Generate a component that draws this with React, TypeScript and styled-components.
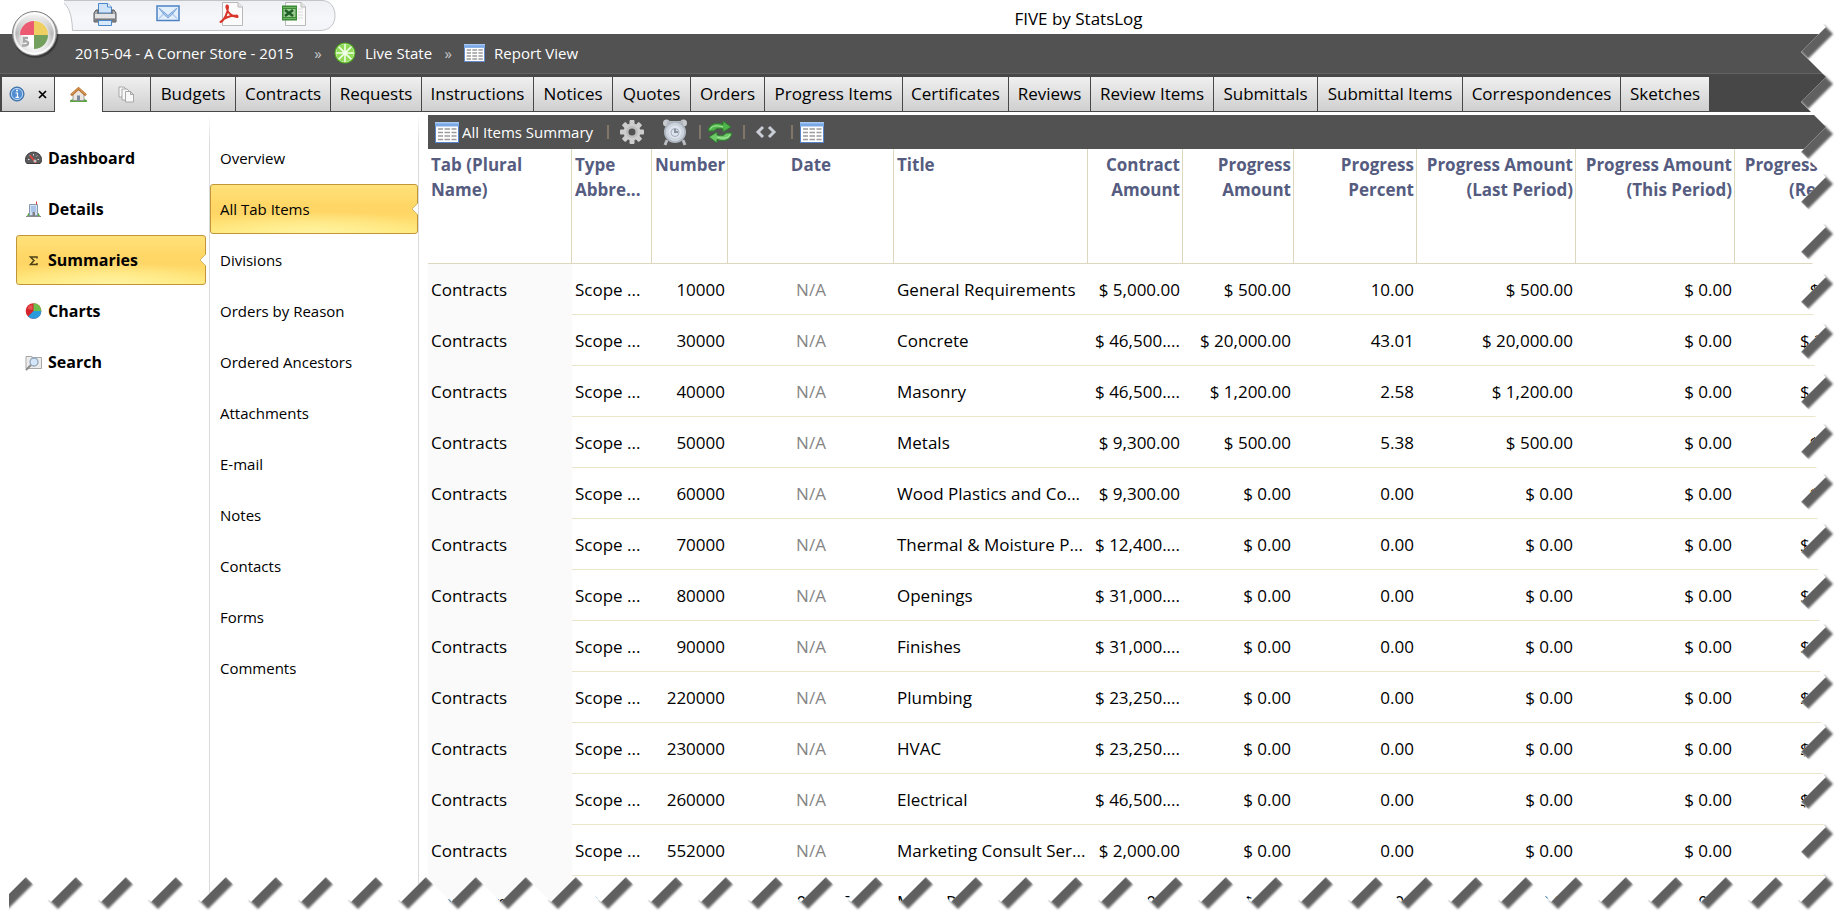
import React, { useEffect, useState } from "react";
import styled, { createGlobalStyle, css } from "styled-components";

const GlobalStyle = createGlobalStyle`
  * { box-sizing: border-box; }
  html, body { margin: 0; padding: 0; background: #fff; }
  body { font-family: "Open Sans", "Segoe UI", sans-serif; color: #000; overflow: hidden; }
  button { font: inherit; color: inherit; margin: 0; padding: 0; border: 0; background: none; cursor: pointer; }
  a { color: inherit; text-decoration: none; }
  svg { display: block; flex: none; }
  ul, ol { list-style: none; margin: 0; padding: 0; }
`;

/* ---------- layout ---------- */

const Screen = styled.div`
  position: relative;
  display: flex;
  flex-direction: column;
  height: 100vh;
  overflow: hidden;
`;

const TitleBar = styled.header`
  display: flex;
  height: 34px;
  padding-left: 64px;
`;

const QuickAccess = styled.div`
  position: relative;
  display: flex;
  gap: 39px;
  width: 272px;
  padding: 2px 0 0 29px;
`;

const QuickBackdrop = styled.svg`
  position: absolute;
  left: 0;
  top: 0;
`;

const QuickButton = styled.button`
  position: relative;
  width: 24px;
  height: 24px;
`;

const AppTitle = styled.h1`
  flex: 1;
  margin: 0;
  padding: 6px 20px 0 0;
  font-size: 17px;
  line-height: 26px;
  font-weight: 400;
  text-align: center;
`;

const OrbButton = styled.button`
  position: absolute;
  left: 10px;
  top: 9px;
  z-index: 2;
`;

const Breadcrumb = styled.nav`
  flex: none;
  height: 40px;
  background: #525252;
  border-bottom: 1px solid #636363;
  color: #fff;
  font-size: 15px;
  line-height: 38px;

  ol { display: flex; padding-left: 75px; }
  li, a { display: flex; align-items: center; }
  li:first-child { min-width: 227px; }
  a { gap: 9px; }
`;

const Chevron = styled.span`
  width: 32px;
  text-align: center;
  color: #c8c8c8;
`;

const TabStrip = styled.div`
  flex: none;
  display: flex;
  height: 38px;
  padding: 3px 0 1px 2px;
  background: #474747;
`;

const Tab = styled.button<{ $width: number; $active?: boolean }>`
  flex: none;
  display: flex;
  align-items: center;
  justify-content: center;
  gap: 13px;
  width: ${(p) => p.$width}px;
  height: ${(p) => (p.$active ? 35 : 34)}px;
  border-right: 1px solid #474747;
  background: ${(p) => (p.$active ? "#fff" : "linear-gradient(#f0f0f0, #cfcfcf)")};
  font-size: 17px;
  line-height: 24px;
  white-space: nowrap;
`;

const Main = styled.div`
  flex: 1;
  display: flex;
  min-height: 0;
  padding-top: 3px;
`;

const navPanel = css`
  flex: none;
  padding-top: 18px;
  border-right: 1px solid;
  border-image: linear-gradient(#fff, #dadada 30px) 1;
`;

const PrimaryNav = styled.nav`
  ${navPanel}
  width: 210px;
  padding-left: 16px;
  padding-right: 3px;
  font-size: 16px;
  font-weight: 700;
`;

const SecondaryNav = styled.nav`
  ${navPanel}
  width: 209px;
  font-size: 15px;
`;

const NavLink = styled.a<{ $selected?: boolean; $inset: number }>`
  position: relative;
  display: flex;
  align-items: center;
  gap: 6px;
  height: 50px;
  margin-bottom: 1px;
  padding-left: ${(p) => p.$inset}px;
  border: 1px solid transparent;
  border-radius: 3px;
  ${(p) =>
    p.$selected &&
    css`
      border-color: #c29536;
      background:
        radial-gradient(ellipse 60% 45% at 50% 100%, #fff3a0, rgba(255, 240, 140, 0)),
        linear-gradient(#ffe27a, #ffd767 40%, #ffd666 58%, #ffe97c);
    `}
`;

const Notch = styled.svg`
  position: absolute;
  right: -1px;
  top: 18px;
`;

const Report = styled.section`
  flex: 1;
  min-width: 0;
  margin-left: 9px;
  overflow: hidden;
`;

const Toolbar = styled.div`
  display: flex;
  align-items: center;
  height: 34px;
  padding-left: 7px;
  background: #525252;
  color: #fff;
  font-size: 15px;
`;

const ReportName = styled.button`
  display: flex;
  align-items: center;
  gap: 3px;
  width: 168px;
`;

const ToolButton = styled.button<{ $width: number }>`
  display: flex;
  align-items: center;
  justify-content: center;
  width: ${(p) => p.$width}px;
  height: 34px;
`;

const Divider = styled.span`
  width: 2px;
  height: 14px;
  margin-left: 4px;
  background: #80766a;
`;

const Grid = styled.table`
  width: 1466px;
  table-layout: fixed;
  border-collapse: separate;
  border-spacing: 0;
  font-size: 17px;
  line-height: 25px;
`;

type Align = "left" | "right" | "center";

const HeadCell = styled.th<{ $align: Align }>`
  height: 115px;
  padding: 3px 2px 0 3px;
  vertical-align: top;
  text-align: ${(p) => p.$align};
  color: #555c80;
  white-space: pre;
  border-right: 1px solid #ddd8bd;
  border-bottom: 1px solid #ddd8bd;
`;

const Cell = styled.td<{ $align: Align; $muted?: boolean }>`
  height: 51px;
  padding: 1px 3px 0;
  text-align: ${(p) => p.$align};
  white-space: nowrap;
  overflow: hidden;
  color: ${(p) => (p.$muted ? "#858585" : "#000")};
  border-bottom: 1px solid #ebe5ca;

  &:first-child {
    background: #fafafa;
    border-bottom-color: #fafafa;
  }
`;

const TornOverlay = styled.svg`
  position: absolute;
  inset: 0;
  width: 100%;
  height: 100%;
  z-index: 5;
  pointer-events: none;
`;

/* ---------- icons ---------- */

const PrinterIcon = () => (
  <svg width="24" height="24" viewBox="0 0 24 24">
    <path d="M5.500 11V1.500h9L18.500 5v6z" fill="#cfe4fb" stroke="#4a86c8" />
    <path d="M14.500 1.500V5h4" fill="#fff" stroke="#4a86c8" />
    <path d="M3 8h2v4h14V8h2l2 3v9H1v-9z" fill="#a9a9ab" stroke="#56575a" />
    <path d="M2 12h20v4H2z" fill="#e4e4e6" />
    <path d="M2 17h20v3H2z" fill="#77787b" />
    <path d="M5.500 18.500h13v5h-13z" fill="#d8e9fc" stroke="#4a86c8" />
  </svg>
);

const MailIcon = () => (
  <svg width="24" height="24" viewBox="0 0 24 24">
    <rect x="1" y="4" width="22" height="14.500" fill="#e4effc" stroke="#4c82c3" strokeWidth="1.500" />
    <path d="M3 16.500l6-6M21 16.500l-6-6" stroke="#b4cdec" strokeWidth="1.500" />
    <path d="M3 6l9 7.500L21 6l-4.500 6-4.500 4-4.500-4z" fill="#a8c6ee" stroke="#7fa6da" />
  </svg>
);

const PageShape = () => (
  <>
    <path d="M3.500 .5H19L23.500 5v18.500H3.500z" fill="#fbfbfb" stroke="#b9b9b9" />
    <path d="M19 .5V5h4.500" fill="#e6e6e6" stroke="#b9b9b9" />
  </>
);

const PdfIcon = () => (
  <svg width="24" height="24" viewBox="0 0 24 24">
    <PageShape />
    <path
      d="M1.500 20C5 18.500 9 11 9 5c0-2-2-2-1.500.5C8.500 10 12 14.500 18 15c1 0 .5-1.700-1-1.600C11 13.500 5 16 1.500 20z"
      fill="none"
      stroke="#d9352b"
      strokeWidth="2"
      strokeLinejoin="round"
    />
  </svg>
);

const ExcelIcon = () => (
  <svg width="24" height="24" viewBox="0 0 24 24">
    <PageShape />
    <path d="M16 7h5M16 10h5M16 13h5M16 16h5" stroke="#dcdcdc" />
    <rect x="0" y="3.500" width="15" height="15" fill="#3c8a35" />
    <path d="M1.500 7h12v8h-12z" fill="#9ccb92" />
    <path d="M3 8l8 6M11 8l-8 6" stroke="#1f5f24" strokeWidth="2.500" />
    <path d="M1 5.500h13M1 16.500h13" stroke="#6db463" />
  </svg>
);

const OrbIcon = () => (
  <svg width="52" height="52" viewBox="0 0 52 52">
    <defs>
      <linearGradient id="orbRim" x1="0" y1="0" x2="0" y2="1">
        <stop offset="0" stopColor="#fdfdfd" />
        <stop offset=".5" stopColor="#b9b9b9" />
        <stop offset="1" stopColor="#f6f6f6" />
      </linearGradient>
      <radialGradient id="orbFace" cx=".5" cy=".5" r=".5">
        <stop offset=".6" stopColor="#fff" />
        <stop offset="1" stopColor="#fff" stopOpacity="0" />
      </radialGradient>
    </defs>
    <circle cx="25.500" cy="26" r="23" fill="#000" opacity=".3" />
    <circle cx="24.500" cy="24.500" r="22" fill="url(#orbRim)" stroke="#808080" />
    <circle cx="24.500" cy="24.500" r="20" fill="none" stroke="#fff" strokeOpacity=".8" strokeWidth="1.500" />
    <circle cx="24.500" cy="27" r="17" fill="url(#orbFace)" />
    <path d="M24 26V12a14 14 0 0 0-14 14z" fill="#ec5a72" />
    <path d="M24 26V12a14 14 0 0 1 14 14z" fill="#f0cf62" />
    <path d="M24 26h14a14 14 0 0 1-14 14z" fill="#74a05e" />
    <path d="M18 29h-4v3.500c5-1.500 6 4.300 0 4h-2" fill="none" stroke="#a8a8a8" strokeWidth="2.400" />
  </svg>
);

const LimeIcon = () => (
  <svg width="22" height="22" viewBox="0 0 22 22">
    <circle cx="11" cy="11" r="10.500" fill="#4fae1c" />
    <circle cx="11" cy="11" r="8.600" fill="#8fdc52" />
    <path
      d="M11 2v18M2 11h18M4.600 4.600l12.800 12.800M17.400 4.600L4.600 17.400"
      stroke="#f2ffe8"
      strokeWidth="1.600"
    />
    <circle cx="11" cy="11" r="9" fill="none" stroke="#d9f7c0" strokeWidth=".8" />
  </svg>
);

const TableIcon = ({ width = 24, height = 21 }: { width?: number; height?: number }) => (
  <svg width={width} height={height} viewBox="0 0 24 21" preserveAspectRatio="none">
    <rect x=".5" y=".5" width="23" height="20" fill="#fff" stroke="#5584cc" />
    <path d="M0 0h24v4.500H0z" fill="#7aa8e6" />
    <path d="M0 0h24v1.500H0z" fill="#a7c8f2" />
    <path
      d="M3 7h5M9.500 7h5.500M16.500 7h5M3 10.500h5M9.500 10.500h5.500M16.500 10.500h5M3 14h5M9.500 14h5.500M16.500 14h5M3 17.500h5M9.500 17.500h5.500M16.500 17.500h5"
      stroke="#9b9b9b"
      strokeWidth="1.500"
    />
  </svg>
);

const InfoIcon = () => (
  <svg width="16" height="16" viewBox="0 0 16 16">
    <circle cx="8" cy="8" r="7" fill="#4f8dd0" stroke="#35679f" />
    <circle cx="8" cy="8" r="5.600" fill="none" stroke="#bcd7f3" />
    <path d="M6.500 7H8.500v4M6.500 11.300h3.500" stroke="#fff" strokeWidth="1.200" fill="none" />
    <circle cx="8" cy="4.600" r="1" fill="#fff" />
  </svg>
);

const CloseIcon = () => (
  <svg width="9" height="9" viewBox="0 0 9 9">
    <path d="M1 1l7 7M8 1L1 8" stroke="#000" strokeWidth="1.700" />
  </svg>
);

const HomeIcon = () => (
  <svg width="17" height="15" viewBox="0 0 17 15">
    <path d="M0 13.500c2-2 4-1 8.500-1s6.500-1 8.500 1v1.500H0z" fill="#5aa63c" />
    <path d="M3 7l5.500-5L14 7v6.500H3z" fill="#eae6df" stroke="#8d8d8d" strokeWidth=".8" />
    <path d="M7 8.500h3v5H7z" fill="#7c8a9c" />
    <path d="M1 8.300L8.500 1.500 16 8.300" fill="none" stroke="#b9722e" strokeWidth="2.600" />
    <path d="M1.500 7.500L8.500 1.200l7 6.300" fill="none" stroke="#e2a864" />
  </svg>
);

const PagesIcon = () => (
  <svg width="17" height="17" viewBox="0 0 17 17" fill="#f8f8f8" stroke="#a8a8a8">
    <path d="M1 1h5l2 2v8H1z" />
    <path d="M4 3h5l2 2v9H4z" />
    <path d="M7.500 5.500h5l3 3v7.500h-8zM12.500 5.500v3h3" />
  </svg>
);

const GaugeIcon = () => (
  <svg width="17" height="17" viewBox="0 0 17 17">
    <path d="M.5 9.500a8 7.500 0 0 1 16 0c0 2-.5 3.500-1.500 4H2C1 13 .5 11.500.5 9.500z" fill="#5c5c5e" stroke="#3b3b3d" />
    <path d="M3 9.500h1.500M4.700 5.500l1 1M8.500 4v1.500M12.300 5.500l-1 1M14 9.500h-1.500" stroke="#e0e0e0" />
    <path d="M5 5.500l6 7.500" stroke="#e04038" strokeWidth="1.800" />
    <circle cx="10" cy="11" r="1.500" fill="#c6c6c6" />
  </svg>
);

const BuildingIcon = () => (
  <svg width="17" height="17" viewBox="0 0 17 17">
    <path d="M2 15l1.500-3h10L15 15z" fill="#5aa846" />
    <path d="M4.500 3.500h8v11h-8z" fill="#d3e2f4" stroke="#8798ad" />
    <path d="M6 6h5M6 8h5M6 10h5" stroke="#7ea6d8" />
    <path d="M7.500 11h2.500v4H7.500z" fill="#7d7f84" />
    <path d="M11.500 3.500V.5" stroke="#d03c33" />
    <path d="M1 15.500h15" stroke="#8a8a8a" />
  </svg>
);

const SigmaIcon = () => (
  <svg width="17" height="17" viewBox="0 0 17 17">
    <path d="M12 6.500V5H5.500L9 8.500 5.500 12.500H12V11" fill="none" stroke="#4b4115" strokeWidth="1.500" />
  </svg>
);

const PieIcon = () => (
  <svg width="17" height="17" viewBox="0 0 17 17">
    <circle cx="8.500" cy="8" r="7.800" fill="#d5232a" />
    <path d="M8.500 8V.2A7.800 7.800 0 0 1 16.300 8z" fill="#6cc04a" />
    <path d="M8.500 8h7.800A7.800 7.800 0 0 1 3 13.500z" fill="#2a9bdc" />
    <path d="M2.500 6a6 5 0 0 1 5-4.500V7z" fill="#f1706b" opacity=".6" />
  </svg>
);

const SearchIcon = () => (
  <svg width="17" height="17" viewBox="0 0 17 17">
    <path d="M1 2.500h6v1h9.500v11H1z" fill="#ececec" stroke="#a9a9a9" />
    <circle cx="9" cy="8" r="4" fill="#d5e6f8" stroke="#90a5bb" strokeWidth="1.300" />
    <path d="M6 11l-5 5" stroke="#8b8b8b" strokeWidth="2" />
  </svg>
);

const GearIcon = () => (
  <svg width="26" height="26" viewBox="0 0 26 26">
    <g fill="#cdcdcd">
      {[0, 45, 90, 135].map((angle) => (
        <rect key={angle} x="10.500" y="1" width="5" height="24" rx="1" transform={`rotate(${angle} 13 13)`} />
      ))}
      <circle cx="13" cy="13" r="8.500" />
    </g>
    <circle cx="13" cy="13" r="6" fill="#bdbdbd" />
    <circle cx="13" cy="13" r="3.500" fill="#525252" />
  </svg>
);

const ClockIcon = () => (
  <svg width="26" height="28" viewBox="0 0 26 28">
    <path d="M5 22l-2 5M21 22l2 5" stroke="#b9bcc2" strokeWidth="3" />
    <circle cx="4.500" cy="5" r="3.500" fill="#c6c9ce" />
    <circle cx="21.500" cy="5" r="3.500" fill="#c6c9ce" />
    <path d="M5 3h16v6H5z" fill="#b3b8c0" />
    <circle cx="13" cy="14" r="11" fill="#aeb5bf" />
    <circle cx="13" cy="14" r="9.300" fill="#ccd3dd" />
    <circle cx="13" cy="14" r="6.500" fill="#dde4ee" />
    <path d="M13 10.500V14h3" stroke="#8891a0" strokeWidth="2" fill="none" />
    <circle cx="13" cy="14.500" r="4" fill="none" stroke="#a3acb9" />
  </svg>
);

const RefreshIcon = () => (
  <svg width="26" height="24" viewBox="0 0 26 24">
    <path d="M1 11C2 4 9 2 16 4.500V1l8 6-8 5V9C11 7.500 8 9 7 11z" fill="#4fb54a" stroke="#2d7d2f" />
    <path d="M25 13c-1 7-8 9-15 6.500V23l-8-6 8-5v3c5 1.500 8 0 9-2z" fill="#6cc965" stroke="#2d7d2f" />
    <path d="M3 9.500C5 5.500 10 5 16 7M23 14.500c-2 4-7 4.500-13 2.500" stroke="#b4ecab" fill="none" />
  </svg>
);

const CodeIcon = () => (
  <svg width="22" height="14" viewBox="0 0 22 14">
    <path d="M8 2L3 7l5 5M14 2l5 5-5 5" fill="none" stroke="#c9ced6" strokeWidth="3" />
  </svg>
);

/* ---------- data ---------- */

const tabs: [string, number][] = [
  ["Budgets", 85],
  ["Contracts", 95],
  ["Requests", 91],
  ["Instructions", 112],
  ["Notices", 79],
  ["Quotes", 78],
  ["Orders", 74],
  ["Progress Items", 138],
  ["Certificates", 106],
  ["Reviews", 82],
  ["Review Items", 123],
  ["Submittals", 104],
  ["Submittal Items", 145],
  ["Correspondences", 158],
  ["Sketches", 89],
];

const primaryItems = [
  { label: "Dashboard", icon: <GaugeIcon /> },
  { label: "Details", icon: <BuildingIcon /> },
  { label: "Summaries", icon: <SigmaIcon /> },
  { label: "Charts", icon: <PieIcon /> },
  { label: "Search", icon: <SearchIcon /> },
];

const secondaryItems = [
  "Overview",
  "All Tab Items",
  "Divisions",
  "Orders by Reason",
  "Ordered Ancestors",
  "Attachments",
  "E-mail",
  "Notes",
  "Contacts",
  "Forms",
  "Comments",
];

const columns: { label: string; width: number; align: Align }[] = [
  { label: "Tab (Plural\nName)", width: 144, align: "left" },
  { label: "Type\nAbbre...", width: 80, align: "left" },
  { label: "Number", width: 76, align: "right" },
  { label: "Date", width: 166, align: "center" },
  { label: "Title", width: 194, align: "left" },
  { label: "Contract\nAmount", width: 95, align: "right" },
  { label: "Progress\nAmount", width: 111, align: "right" },
  { label: "Progress\nPercent", width: 123, align: "right" },
  { label: "Progress Amount\n(Last Period)", width: 159, align: "right" },
  { label: "Progress Amount\n(This Period)", width: 159, align: "right" },
  { label: "Progress Amount\n(Remaining)", width: 159, align: "right" },
];

const scope = (...rest: string[]) => ["Contracts", "Scope ...", ...rest];

const rows: string[][] = [
  scope("10000", "N/A", "General Requirements", "$ 5,000.00", "$ 500.00", "10.00", "$ 500.00", "$ 0.00", "$ 4,500.00"),
  scope("30000", "N/A", "Concrete", "$ 46,500....", "$ 20,000.00", "43.01", "$ 20,000.00", "$ 0.00", "$ 26,500.00"),
  scope("40000", "N/A", "Masonry", "$ 46,500....", "$ 1,200.00", "2.58", "$ 1,200.00", "$ 0.00", "$ 45,300.00"),
  scope("50000", "N/A", "Metals", "$ 9,300.00", "$ 500.00", "5.38", "$ 500.00", "$ 0.00", "$ 8,800.00"),
  scope("60000", "N/A", "Wood Plastics and Co...", "$ 9,300.00", "$ 0.00", "0.00", "$ 0.00", "$ 0.00", "$ 9,300.00"),
  scope("70000", "N/A", "Thermal & Moisture P...", "$ 12,400....", "$ 0.00", "0.00", "$ 0.00", "$ 0.00", "$ 12,400.00"),
  scope("80000", "N/A", "Openings", "$ 31,000....", "$ 0.00", "0.00", "$ 0.00", "$ 0.00", "$ 31,000.00"),
  scope("90000", "N/A", "Finishes", "$ 31,000....", "$ 0.00", "0.00", "$ 0.00", "$ 0.00", "$ 31,000.00"),
  scope("220000", "N/A", "Plumbing", "$ 23,250....", "$ 0.00", "0.00", "$ 0.00", "$ 0.00", "$ 23,250.00"),
  scope("230000", "N/A", "HVAC", "$ 23,250....", "$ 0.00", "0.00", "$ 0.00", "$ 0.00", "$ 23,250.00"),
  scope("260000", "N/A", "Electrical", "$ 46,500....", "$ 0.00", "0.00", "$ 0.00", "$ 0.00", "$ 46,500.00"),
  scope("552000", "N/A", "Marketing Consult Ser...", "$ 2,000.00", "$ 0.00", "0.00", "$ 0.00", "$ 0.00", "$ 2,000.00"),
  ["Contracts", "CO", "1", "3/10/2015", "Metal Roof", "$ 600.00", "$ 0.00", "0.00", "$ 0.00", "$ 0.00", "$ 600.00"],
];

/* ---------- torn paper edge ---------- */

const TOOTH = 25;
const SHADOW = 7;

function tornPaths(width: number, height: number) {
  const right = width - 15;
  const bottom = height - 14;
  const points: string[] = [];
  const shadows: string[] = [];

  // A band that falls down and to the right of one slanted tooth edge.
  const addShadow = (x: number, y: number) => {
    const end = x - TOOTH;
    const base = y + TOOTH;
    shadows.push(
      `M${x - 2},${y - 2}L${end - 2},${base - 2}L${end + SHADOW},${base + SHADOW}L${x + SHADOW},${y + SHADOW}Z`,
    );
  };

  let x = right - TOOTH;
  for (let i = 0; x > -2 * TOOTH; i++, x -= TOOTH) {
    points.push(`${x},${i % 2 ? bottom - TOOTH : bottom}`);
    if (i % 2) addShadow(x, bottom - TOOTH);
  }
  points.push("-50,0", `${right - TOOTH},0`);

  const side: string[] = [];
  let y = bottom - TOOTH;
  for (let i = 0; y > 0; i++, y -= TOOTH) {
    side.push(`${i % 2 ? right - TOOTH : right},${y}`);
    if (i % 2 === 0) addShadow(right, y);
  }
  return {
    page: `M${points.join("L")}L${side.reverse().join("L")}Z`,
    shadow: shadows.join(""),
  };
}

function TornEdge() {
  const [size, setSize] = useState({ w: window.innerWidth, h: window.innerHeight });
  useEffect(() => {
    const update = () => setSize({ w: window.innerWidth, h: window.innerHeight });
    window.addEventListener("resize", update);
    return () => window.removeEventListener("resize", update);
  }, []);
  const { page, shadow } = tornPaths(size.w, size.h);
  const outside = `M-60,-60H${size.w + 60}V${size.h + 60}H-60Z${page}`;
  return (
    <TornOverlay aria-hidden="true">
      <defs>
        <clipPath id="outsidePage">
          <path d={outside} clipRule="evenodd" />
        </clipPath>
        <clipPath id="shadowBounds">
          <rect x="9" y="12" width="100%" height="100%" />
        </clipPath>
        <filter id="soften">
          <feGaussianBlur stdDeviation="1.200" />
        </filter>
      </defs>
      <path d={outside} fill="#fff" fillRule="evenodd" />
      <g clipPath="url(#outsidePage)">
        <g clipPath="url(#shadowBounds)">
          <path d={shadow} fill="#606060" filter="url(#soften)" />
        </g>
      </g>
    </TornOverlay>
  );
}

/* ---------- app ---------- */

function NotchMark() {
  return (
    <Notch width="7" height="12" viewBox="0 0 7 12">
      <path d="M7 0L1 6l6 6z" fill="#fff" />
      <path d="M7 0L1 6l6 6" fill="none" stroke="#c9a85a" strokeWidth=".8" />
    </Notch>
  );
}

export default function App() {
  return (
    <Screen>
      <GlobalStyle />
      <OrbButton aria-label="Application menu">
        <OrbIcon />
      </OrbButton>
      <TitleBar>
        <QuickAccess>
          <QuickBackdrop width="272" height="34" viewBox="0 0 272 34">
            <defs>
              <linearGradient id="quickFill" x1="0" y1="0" x2="0" y2="1">
                <stop offset="0" stopColor="#eef0f4" />
                <stop offset=".6" stopColor="#f5f7fa" />
                <stop offset="1" stopColor="#f3f4f7" />
              </linearGradient>
            </defs>
            <path
              d="M-8 .5C3 .5 8 12 8.500 30.500H256C266 30.500 271 24 271 15.500S266 .5 258 .5z"
              fill="url(#quickFill)"
              stroke="#c2c4c8"
            />
          </QuickBackdrop>
          <QuickButton aria-label="Print"><PrinterIcon /></QuickButton>
          <QuickButton aria-label="E-mail"><MailIcon /></QuickButton>
          <QuickButton aria-label="Export to PDF"><PdfIcon /></QuickButton>
          <QuickButton aria-label="Export to Excel"><ExcelIcon /></QuickButton>
        </QuickAccess>
        <AppTitle>FIVE by StatsLog</AppTitle>
      </TitleBar>

      <Breadcrumb aria-label="Breadcrumb">
        <ol>
          <li><a href="#project">2015-04 - A Corner Store - 2015</a></li>
          <li><Chevron>»</Chevron><a href="#state"><LimeIcon />Live State</a></li>
          <li><Chevron>»</Chevron><a href="#view"><TableIcon width={21} height={18} />Report View</a></li>
        </ol>
      </Breadcrumb>

      <TabStrip>
        <Tab $width={53} aria-label="Information"><InfoIcon /><CloseIcon /></Tab>
        <Tab $width={48} $active aria-label="Home"><HomeIcon /></Tab>
        <Tab $width={48} aria-label="Pages"><PagesIcon /></Tab>
        {tabs.map(([label, width]) => (
          <Tab key={label} $width={width}>{label}</Tab>
        ))}
      </TabStrip>

      <Main>
        <PrimaryNav aria-label="Sections">
          {primaryItems.map(({ label, icon }) => (
            <NavLink key={label} href={`#${label}`} $inset={8} $selected={label === "Summaries"}>
              {icon}
              {label}
              {label === "Summaries" && <NotchMark />}
            </NavLink>
          ))}
        </PrimaryNav>
        <SecondaryNav aria-label="Summaries">
          {secondaryItems.map((label) => (
            <NavLink key={label} href={`#${label}`} $inset={9} $selected={label === "All Tab Items"}>
              {label}
              {label === "All Tab Items" && <NotchMark />}
            </NavLink>
          ))}
        </SecondaryNav>
        <Report>
          <Toolbar>
            <ReportName><TableIcon />All Items Summary</ReportName>
            <Divider />
            <ToolButton $width={46} aria-label="Settings"><GearIcon /></ToolButton>
            <ToolButton $width={40} aria-label="Schedule"><ClockIcon /></ToolButton>
            <Divider />
            <ToolButton $width={38} aria-label="Refresh"><RefreshIcon /></ToolButton>
            <Divider />
            <ToolButton $width={42} aria-label="Source"><CodeIcon /></ToolButton>
            <Divider />
            <ToolButton $width={38} aria-label="Table view"><TableIcon /></ToolButton>
          </Toolbar>
          <Grid>
            <colgroup>
              {columns.map((c) => (
                <col key={c.label} width={c.width} />
              ))}
            </colgroup>
            <thead>
              <tr>
                {columns.map((c) => (
                  <HeadCell key={c.label} $align={c.align}>{c.label}</HeadCell>
                ))}
              </tr>
            </thead>
            <tbody>
              {rows.map((row) => (
                <tr key={row[2]}>
                  {row.map((value, i) => (
                    <Cell key={columns[i].label} $align={columns[i].align} $muted={value === "N/A"}>
                      {value}
                    </Cell>
                  ))}
                </tr>
              ))}
            </tbody>
          </Grid>
        </Report>
      </Main>
      <TornEdge />
    </Screen>
  );
}
